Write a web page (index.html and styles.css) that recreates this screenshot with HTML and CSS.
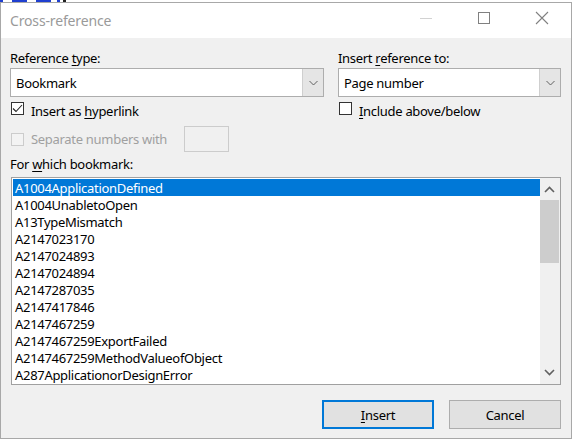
FILE: index.html
```html
<!DOCTYPE html>
<html lang="en">
<head>
<meta charset="utf-8">
<title>Cross-reference</title>
<link rel="stylesheet" href="styles.css">
</head>
<body>
<div class="backdrop">
  <span class="mark m1"></span><span class="mark m2"></span><span class="mark m3"></span><span class="mark m4"></span><span class="mark dark"></span>
</div>
<div class="window">
  <div class="titlebar">
    <div class="title">Cross-reference</div>
    <div class="controls">
      <div class="ctl">
        <svg width="14" height="14" viewBox="0 0 14 14"><line x1="1" y1="7.5" x2="13" y2="7.5" stroke="#d2d2d2" stroke-width="1"/></svg>
      </div>
      <div class="ctl">
        <svg width="14" height="14" viewBox="0 0 14 14"><rect x="1.5" y="1.5" width="11" height="11" fill="none" stroke="#808080" stroke-width="1"/></svg>
      </div>
      <div class="ctl">
        <svg width="14" height="14" viewBox="0 0 14 14"><path d="M1 1 L13 13 M13 1 L1 13" stroke="#808080" stroke-width="1.1" fill="none"/></svg>
      </div>
    </div>
  </div>
  <div class="content">
    <div class="toprow">
      <div class="col colleft">
        <div class="label">Reference <u>t</u>ype:</div>
        <div class="combo">
          <span class="value">Bookmark</span>
          <span class="drop"><svg width="9" height="6" viewBox="0 0 9 6"><polyline points="0.5,1 4.5,5 8.5,1" fill="none" stroke="#606060" stroke-width="1"/></svg></span>
        </div>
        <div class="check">
          <span class="box"><svg width="13" height="13" viewBox="0 0 13 13"><polyline points="2,6.5 5,9.5 11,3" fill="none" stroke="#222" stroke-width="1.1"/></svg></span>
          <span class="checktext">Insert as <u>h</u>yperlink</span>
        </div>
      </div>
      <div class="col colright">
        <div class="label">Insert <u>r</u>eference to:</div>
        <div class="combo">
          <span class="value">Page number</span>
          <span class="drop"><svg width="9" height="6" viewBox="0 0 9 6"><polyline points="0.5,1 4.5,5 8.5,1" fill="none" stroke="#606060" stroke-width="1"/></svg></span>
        </div>
        <div class="check">
          <span class="box"></span>
          <span class="checktext"><u>I</u>nclude above/below</span>
        </div>
      </div>
    </div>
    <div class="seprow">
      <span class="box disabled"></span>
      <span class="distext">Separate numbers with</span>
      <span class="sepinput"></span>
    </div>
    <div class="label listlabel">For <u>w</u>hich bookmark:</div>
    <div class="listbox">
      <div class="items">
        <div class="item selected">A1004ApplicationDefined</div>
        <div class="item">A1004UnabletoOpen</div>
        <div class="item">A13TypeMismatch</div>
        <div class="item">A2147023170</div>
        <div class="item">A2147024893</div>
        <div class="item">A2147024894</div>
        <div class="item">A2147287035</div>
        <div class="item">A2147417846</div>
        <div class="item">A2147467259</div>
        <div class="item">A2147467259ExportFailed</div>
        <div class="item">A2147467259MethodValueofObject</div>
        <div class="item">A287ApplicationorDesignError</div>
      </div>
      <div class="scrollbar">
        <div class="arrow">
          <svg width="20" height="20" viewBox="0 0 20 20"><polyline points="5,14 9.5,9.5 14,14" fill="none" stroke="#606060" stroke-width="1.6"/></svg>
        </div>
        <div class="track"><div class="thumb"></div></div>
        <div class="arrow">
          <svg width="20" height="20" viewBox="0 0 20 20"><polyline points="5,6 9.5,10.5 14,6" fill="none" stroke="#606060" stroke-width="1.6"/></svg>
        </div>
      </div>
    </div>
    <div class="buttons">
      <div class="btn default"><u>I</u>nsert</div>
      <div class="btn">Cancel</div>
    </div>
  </div>
</div>
</body>
</html>
```

FILE: styles.css
```css
* { box-sizing: border-box; }

html, body {
  margin: 0;
  padding: 0;
  background: #ffffff;
}

body {
  width: 572px;
  height: 440px;
  overflow: hidden;
  font-family: "Noto Sans", "Open Sans", sans-serif;
  font-size: 13px;
  letter-spacing: -0.3px;
  color: #000;
}

u { text-decoration-thickness: 1px; text-underline-offset: 2px; }

.backdrop {
  display: flex;
  height: 2px;
}
.mark { height: 2px; background: #1f3fd0; }
.m1 { width: 3px; }
.m2 { width: 15px; margin-left: 9px; }
.m3 { width: 15px; margin-left: 9px; }
.m4 { width: 3px; margin-left: 6px; }
.dark { width: 3px; margin-left: 3px; background: #222; }

.window {
  width: 572px;
  height: 437px;
  border: 1px solid #a8a8a8;
  background: #f0f0f0;
  display: flex;
  flex-direction: column;
}

.titlebar {
  height: 35px;
  background: #ffffff;
  display: flex;
  align-items: center;
  justify-content: space-between;
  flex: none;
}

.title {
  padding-left: 9px;
  font-size: 14px;
  letter-spacing: -0.15px;
  color: #9a9a9a;
}

.controls {
  display: flex;
  height: 35px;
}
.ctl {
  width: 58px;
  height: 35px;
  display: flex;
  align-items: center;
  justify-content: center;
  padding-bottom: 5px;
}

.content {
  flex: 1;
  padding: 12px 10px 0 9px;
  display: flex;
  flex-direction: column;
}

.label {
  height: 16px;
  line-height: 16px;
  white-space: nowrap;
}

.toprow {
  display: flex;
  gap: 14px;
}
.col { display: flex; flex-direction: column; }
.colleft { width: 314px; }
.colright { flex: 1; }

.combo {
  margin-top: 2px;
  height: 29px;
  border: 1px solid #adadad;
  background: #ffffff;
  display: flex;
}
.combo .value {
  flex: 1;
  padding-top: 2px;
  line-height: 25px;
  padding-left: 5px;
}
.combo .drop {
  width: 21px;
  background: #e5e5e5;
  border-left: 1px solid #cfcfcf;
  display: flex;
  align-items: center;
  justify-content: center;
}

.check {
  margin-top: 6px;
  height: 16px;
  line-height: 16px;
  display: flex;
  align-items: flex-start;
}
.box {
  width: 13px;
  height: 13px;
  border: 1px solid #333;
  background: #fff;
  margin-left: 1px;
  margin-top: -1px;
  flex: none;
  display: block;
}
.box svg { display: block; margin: -1px 0 0 -1px; }
.checktext { margin-left: 7px; white-space: nowrap; }

.seprow {
  margin-top: 12px;
  height: 16px;
  line-height: 16px;
  display: flex;
  align-items: center;
}
.box.disabled {
  margin-top: 0;
  border-color: #cccccc;
  background: #f3f3f3;
}
.distext {
  margin-left: 7px;
  width: 153px;
  flex: none;
  color: #a0a0a0;
  white-space: nowrap;
}
.sepinput {
  width: 45px;
  height: 26px;
  border: 1px solid #cccccc;
  background: #f0f0f0;
  flex: none;
}

.listlabel { margin-top: 9px; }

.listbox {
  margin-top: 5px;
  height: 208px;
  border: 1px solid #a0a0a0;
  background: #ffffff;
  display: flex;
  margin-left: 1px;
}
.items {
  flex: 1;
  padding: 1px 0 0 1px;
}
.item {
  height: 17px;
  padding-top: 1px;
  line-height: 16px;
  padding-left: 2px;
  white-space: nowrap;
}
.item.selected {
  background: #0078d7;
  color: #ffffff;
}

.scrollbar {
  width: 20px;
  background: #f0f0f0;
  display: flex;
  flex-direction: column;
}
.arrow { height: 20px; flex: none; }
.arrow svg { display: block; }
.track { flex: 1; padding-top: 2px; }
.thumb {
  width: 19px;
  height: 63px;
  background: #cdcdcd;
}

.buttons {
  margin-top: 15px;
  display: flex;
  justify-content: flex-end;
  gap: 15px;
}
.btn {
  width: 112px;
  height: 29px;
  border: 1px solid #adadad;
  background: #e1e1e1;
  display: flex;
  align-items: center;
  justify-content: center;
}
.btn.default {
  border: 2px solid #0078d7;
}
```
